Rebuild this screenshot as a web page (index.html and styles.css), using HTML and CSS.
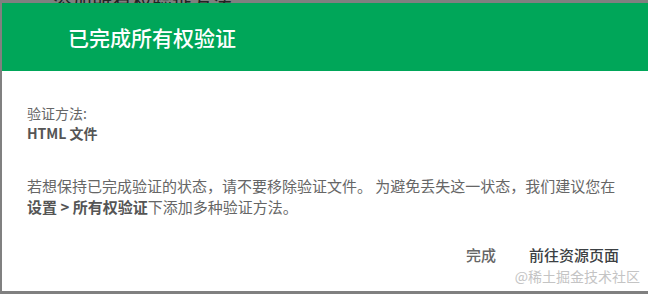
FILE: index.html
```html
<!DOCTYPE html>
<html lang="zh-CN">
<head>
  <meta charset="UTF-8" />
  <title>已完成所有权验证</title>
  <link rel="stylesheet" href="styles.css">
</head>
<body>

<div class="behind">添加所有权验证方法</div>

<div class="dialog">
  <div class="dialog-header">已完成所有权验证</div>

  <div class="dialog-body">
    <div class="method">
      <div>验证方法:</div>
      <div class="strong">HTML 文件</div>
    </div>

    <p class="note">
      若想保持已完成验证的状态，请不要移除验证文件。 为避免丢失这一状态，我们建议您在<br>
      <span class="strong">设置 &gt; 所有权验证</span>下添加多种验证方法。
    </p>
  </div>

  <div class="dialog-actions">
    <button class="btn">完成</button>
    <button class="btn primary">前往资源页面</button>
  </div>

  <div class="watermark">@稀土掘金技术社区</div>
</div>

</body>
</html>
```

FILE: styles.css
```css
body {
  margin: 0;
  background: #808080;
  font-family: "Noto Sans CJK SC", "Liberation Sans", sans-serif;
  overflow: hidden;
  position: relative;
}

.behind {
  position: absolute;
  top: -13px; left: 52px;
  font-size: 20px; color: #222;
}

.dialog {
  position: relative;
  margin: 3px 0 0 2px;
  height: 288px;
  background: #fff;
}

.dialog-header {
  height: 68px;
  padding-left: 66px;
  display: flex; align-items: center;
  background: #00a659;
  color: #fff;
  font-size: 21px;
  font-weight: 500;
}

.dialog-body {
  padding: 32px 25px 0;
  color: #666;
  font-size: 14px;
}

.method { line-height: 20px; }

.strong { font-weight: bold; color: #555; }

.note {
  margin: 32px 0 0;
  font-size: 15px;
  line-height: 21px;
}

.dialog-actions {
  display: flex; justify-content: flex-end;
  gap: 33px;
  padding: 28px 29px 0 0;
}

.btn {
  border: none; background: none; padding: 0;
  font-family: inherit; font-size: 15px;
  line-height: 20px;
  color: #666; font-weight: 500;
  cursor: pointer;
}
.btn.primary { color: #3c4043; }

.watermark {
  position: absolute;
  right: 8px; bottom: 6px;
  font-size: 14px; line-height: 18px;
  color: #c4c4c4;
}
```
